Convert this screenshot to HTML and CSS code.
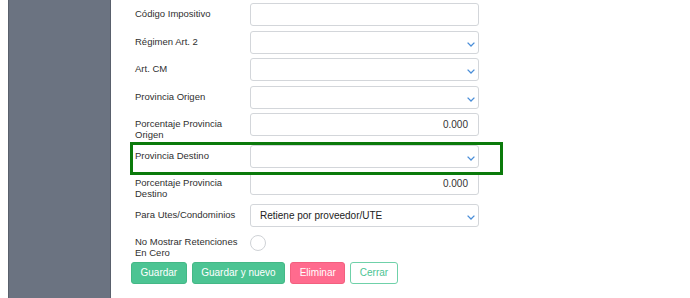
FILE: index.html
```html
<!DOCTYPE html>
<html lang="es">
<head>
  <meta charset="UTF-8" />
  <meta name="viewport" content="width=device-width, initial-scale=1.0"/>
  <title>Retenciones</title>
  <link rel="stylesheet" href="styles.css">
</head>
<body>
  <div class="edge"></div>
  <aside class="sidebar"></aside>

  <main class="content">
    <form class="form">
      <div class="row">
        <label class="lbl">Código Impositivo</label>
        <div class="field"></div>
      </div>
      <div class="row">
        <label class="lbl">Régimen Art. 2</label>
        <div class="field select">
          <span></span>
          <svg class="chev" width="8" height="5" viewBox="0 0 8 5"><polyline points="0.6,0.6 4,4 7.4,0.6" /></svg>
        </div>
      </div>
      <div class="row">
        <label class="lbl">Art. CM</label>
        <div class="field select">
          <span></span>
          <svg class="chev" width="8" height="5" viewBox="0 0 8 5"><polyline points="0.6,0.6 4,4 7.4,0.6" /></svg>
        </div>
      </div>
      <div class="row">
        <label class="lbl">Provincia Origen</label>
        <div class="field select">
          <span></span>
          <svg class="chev" width="8" height="5" viewBox="0 0 8 5"><polyline points="0.6,0.6 4,4 7.4,0.6" /></svg>
        </div>
      </div>
      <div class="row">
        <label class="lbl">Porcentaje Provincia Origen</label>
        <div class="field num">0.000</div>
      </div>
      <div class="row marked">
        <label class="lbl">Provincia Destino</label>
        <div class="field select">
          <span></span>
          <svg class="chev" width="8" height="5" viewBox="0 0 8 5"><polyline points="0.6,0.6 4,4 7.4,0.6" /></svg>
        </div>
        <div class="highlight"></div>
      </div>
      <div class="row">
        <label class="lbl">Porcentaje Provincia Destino</label>
        <div class="field num">0.000</div>
      </div>
      <div class="row">
        <label class="lbl">Para Utes/Condominios</label>
        <div class="field select">
          <span>Retiene por proveedor/UTE</span>
          <svg class="chev" width="8" height="5" viewBox="0 0 8 5"><polyline points="0.6,0.6 4,4 7.4,0.6" /></svg>
        </div>
      </div>
      <div class="row">
        <label class="lbl">No Mostrar Retenciones En Cero</label>
        <span class="radio"></span>
      </div>

      <div class="actions">
        <button type="button" class="btn btn-green">Guardar</button>
        <button type="button" class="btn btn-green">Guardar y nuevo</button>
        <button type="button" class="btn btn-red">Eliminar</button>
        <button type="button" class="btn btn-outline">Cerrar</button>
      </div>
    </form>
  </main>
</body>
</html>
```

FILE: styles.css
```css
body {
  margin: 0;
  font-family: 'Liberation Sans', Arial, sans-serif;
  background: white;
  color: #333;
  display: flex;
  height: 100vh;
  overflow: hidden;
}
.edge {
  width: 8px;
  flex-shrink: 0;
}
.sidebar {
  width: 101px;
  flex-shrink: 0;
  background: #6b7381;
  border-left: 1px solid #59606c;
  border-right: 1px solid #59606c;
}
.content {
  flex: 1;
  padding: 3px 0 0 20px;
}
.form {
  width: 348px;
}
.row {
  display: flex;
  align-items: flex-start;
  margin-bottom: 4.5px;
}
.marked {
  position: relative;
}
.lbl {
  width: 104px;
  flex-shrink: 0;
  padding: 6px 11px 0 4px;
  font-size: 9.5px;
  line-height: 10.5px;
  color: #2f2f2f;
}
.field {
  height: 21px;
  border: 1px solid #d3d6da;
  border-radius: 3px;
  background: white;
  font-size: 10px;
  display: flex;
  align-items: center;
  padding: 0 10px 0 0;
  width: 217px;
  flex-shrink: 0;
}
.num {
  justify-content: flex-end;
  color: #333;
}
.select {
  justify-content: space-between;
  padding: 0 3px 0 9px;
  width: 215px;
  color: #222;
}
.chev {
  margin-top: 4px;
}
.chev polyline {
  fill: none;
  stroke: #4a8ed8;
  stroke-width: 1.3;
}
.radio {
  width: 14px;
  height: 14px;
  border: 1px solid #cfd2d6;
  border-radius: 50%;
  margin-top: 3.5px;
}
.highlight {
  position: absolute;
  left: -1px;
  top: -3px;
  width: 367px;
  height: 27px;
  border: 3px solid #0b7a0b;
  pointer-events: none;
}
.actions {
  display: flex;
  gap: 5px;
  margin-top: -1px;
}
.btn {
  height: 22px;
  padding: 0 8.5px;
  font-family: 'Liberation Sans', Arial, sans-serif;
  font-size: 10px;
  border-radius: 3px;
  cursor: pointer;
  border: 1px solid #44b886;
}
.btn-green {
  background: #4cc493;
  color: white;
}
.btn-red {
  background: #ff6b8e;
  border-color: #f2607f;
  color: white;
}
.btn-outline {
  background: white;
  color: #4cc493;
  border-color: #6fd1a9;
}
```
